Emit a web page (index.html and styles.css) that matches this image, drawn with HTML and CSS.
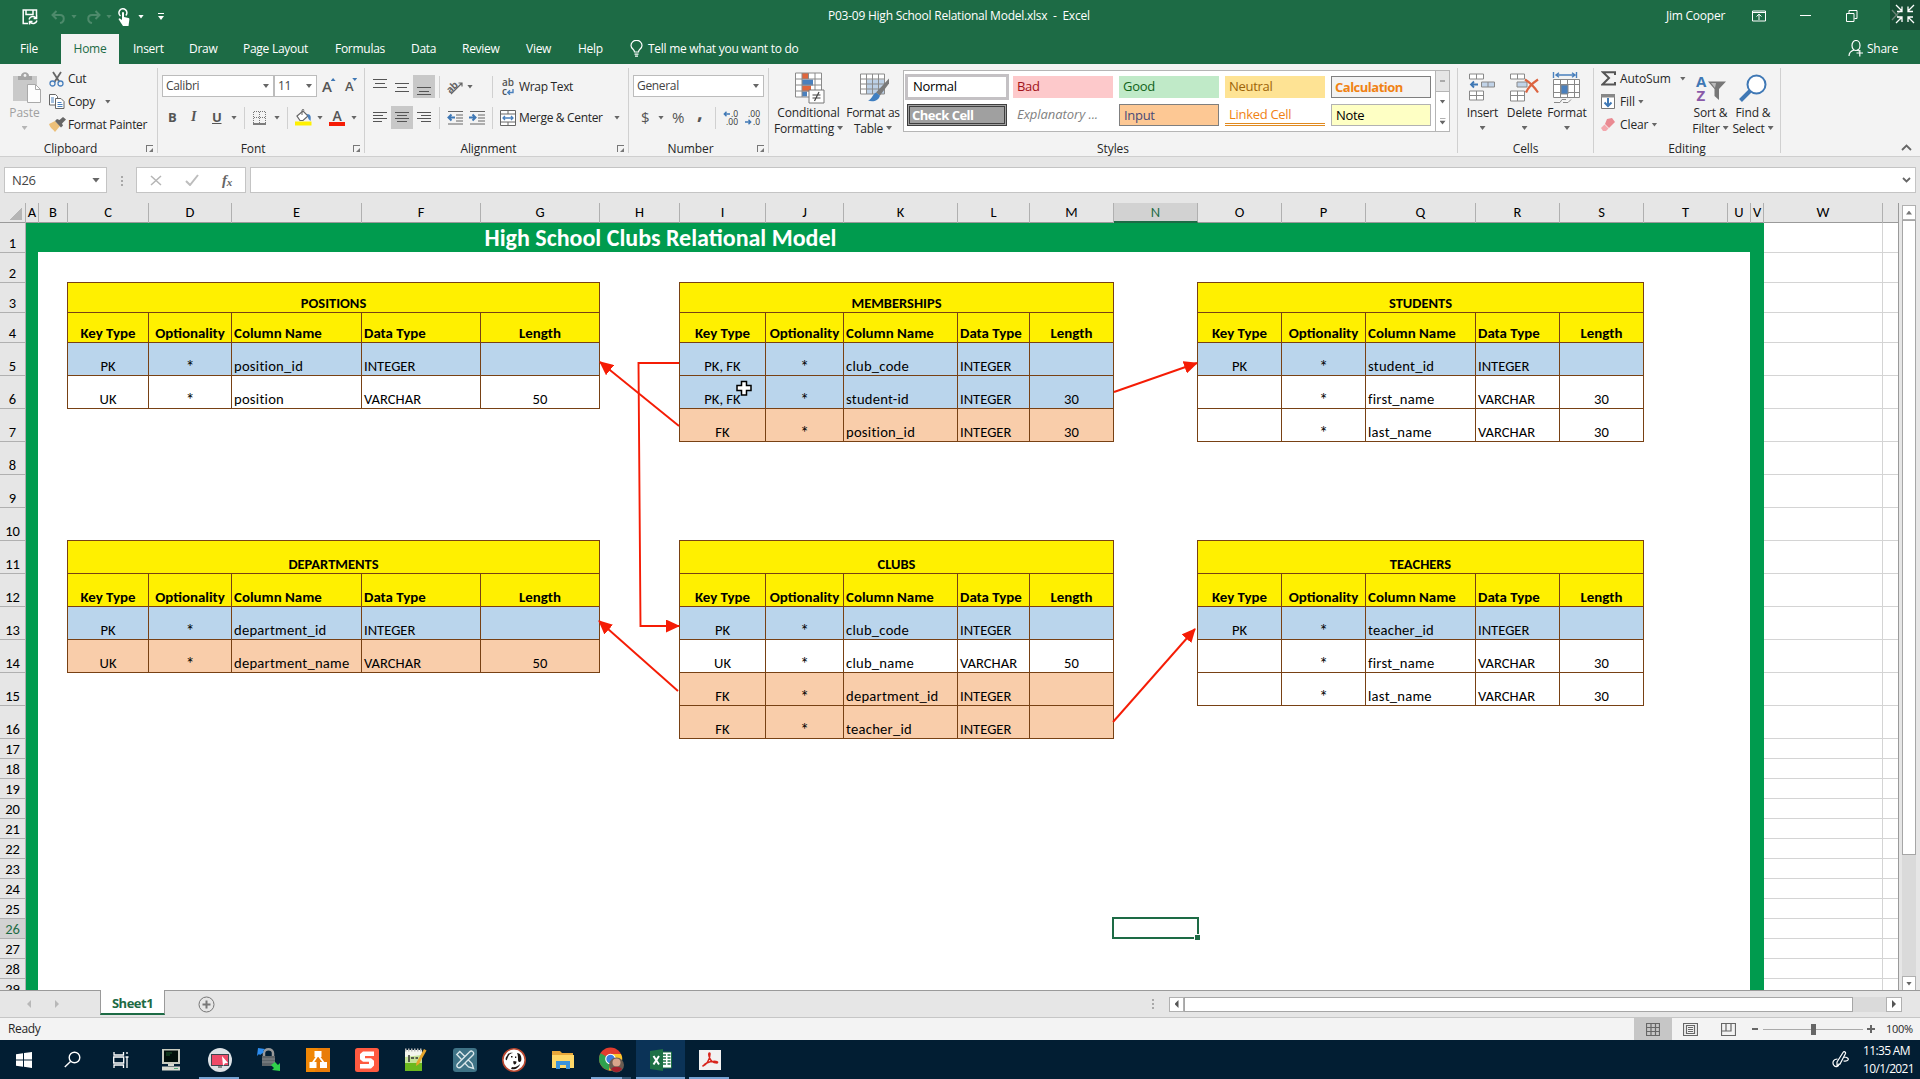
FILE: index.html
```html
<!DOCTYPE html>
<html lang="en">
<head>
<meta charset="utf-8">
<title>P03-09 High School Relational Model.xlsx - Excel</title>
<link rel="stylesheet" href="styles.css">
</head>
<body>
<div class="app">
  <header class="titlebar">
    <div class="quick">
      <svg width="16" height="16" viewBox="0 0 16 16" fill="none" stroke="#fff" stroke-width="1.5"><path d="M6 14.5H1.2V1h13.3v5M4 1v4.5h7V1"/><path d="M7 10.5a4 4 0 0 1 7-1.5M15 11.500a4 4 0 0 1-7 1.500M14.600 6v3.500h-3M7.500 15.500v-3h3"/></svg>
      <svg width="15" height="14" viewBox="0 0 15 14" fill="none" stroke="#4d8a6b" stroke-width="2"><path d="M5.500 1L1.500 5l4 4M2 5h7c5 0 5 7 0 8"/></svg>
      <i class="caret dim"></i>
      <svg width="15" height="14" viewBox="0 0 15 14" fill="none" stroke="#4d8a6b" stroke-width="2"><path d="M9.500 1l4 4-4 4M13 5H6C1 5 1 12 6 13"/></svg>
      <i class="caret dim"></i>
      <svg width="12" height="18" viewBox="0 0 12 18"><path d="M3 15L.5 11l1-.8L4 12V5c0-1.500 2-1.500 2 0v4l4.500 1c1 .3 1 1 .8 2L10.500 18H5z" fill="#fff"/><path d="M2.500 8A4 4 0 1 1 7.800 7.600" fill="none" stroke="#fff" stroke-width="1.500"/></svg>
      <i class="caret white"></i>
      <span class="customize"></span>
    </div>
    <div class="doc-title">P03-09 High School Relational Model.xlsx&nbsp; -&nbsp; Excel</div>
    <div class="account">Jim Cooper</div>
    <div class="win">
      <svg width="14" height="12" viewBox="0 0 14 12" fill="none" stroke="#fff"><path d="M.5 1h13v10H.5zM.5 2.500h13M7 10V4.500M4.500 6.500L7 4.200l2.500 2.300"/></svg>
      <svg width="11" height="12" viewBox="0 0 11 12" stroke="#fff"><path d="M0 5.500h11"/></svg>
      <svg width="12" height="12" viewBox="0 0 12 12" fill="none" stroke="#fff"><path d="M.5 3.500h7.500v8H.5zM3 3.500V.5h8v8H8.500"/></svg>
    </div>
    <div class="exit-full"><svg width="30" height="30" viewBox="0 0 30 30" fill="none" stroke="#fff" stroke-width="1.300"><path d="M2 10l9 10M11 10l-9 10" stroke="#6b8276"/><path d="M6 5l6 6M12 6.500V11.500H7M24 5l-6 6M18 6.500V11.500h5M6 23l6-6M12 22v-5H7M24 23l-6-6M18 22v-5h5"/></svg></div>
  </header>

  <nav class="tabs">
    <span>File</span><span class="active">Home</span><span>Insert</span><span>Draw</span><span>Page Layout</span><span>Formulas</span><span>Data</span><span>Review</span><span>View</span><span>Help</span>
    <svg width="13" height="17" viewBox="0 0 13 17" fill="none" stroke="#fff" stroke-width="1.200"><path d="M4.500 12c0-3-3.500-3-3.500-6.500a5.300 5 0 0 1 11 0C12 9 8.500 9 8.500 12zM4.500 14.200h4M5 16.200h3"/></svg>
    <span>Tell me what you want to do</span>
    <svg width="16" height="17" viewBox="0 0 16 17" fill="none" stroke="#fff" stroke-width="1.200"><ellipse cx="8" cy="5.500" rx="4" ry="5"/><path d="M1 16c0-3 2-5 5-6M9 10l2 1M8.500 13h6.500M11.800 10v6.500"/></svg>
    <span>Share</span>
  </nav>

  <section class="ribbon">
    <div class="group clipboard">
      <div class="content">
        <div class="paste">
          <svg width="30" height="31" viewBox="0 0 30 31"><path d="M0 4h24v25H0z" fill="#c9c9c9"/><path d="M5 8V4h3c0-5 8-5 8 0h3v4z" fill="#a5a5a5"/><circle cx="12" cy="3.500" r="1.400" fill="#f3f3f3"/><path d="M14.500 12.500h8l5 5v13h-13z" fill="#fdfdfd" stroke="#a9a9a9"/><path d="M22.500 12.500v5h5" fill="none" stroke="#a9a9a9"/></svg>
          <span>Paste</span><i class="caret"></i>
        </div>
        <div class="stack">
          <div><svg width="16" height="16" viewBox="0 0 16 16" fill="none" stroke-width="1.800"><path d="M4 1l6.500 10M12 1L5.500 11" stroke="#666"/><circle cx="3.500" cy="12.500" r="2.500" stroke="#4a80bd" stroke-width="1.300"/><circle cx="11.500" cy="12.500" r="2.500" stroke="#4a80bd" stroke-width="1.300"/></svg><span>Cut</span></div>
          <div><svg width="16" height="15" viewBox="0 0 16 15" fill="#fff" stroke="#666"><path d="M.5.5h6l2 2v8.500h-8z"/><path d="M6.500 4.500h5.500l3 3v7H6.500z"/><path d="M2 4h3M2 6h3M2 8h3M8.500 8.500h4M8.500 10.500h5M8.500 12.500h5" stroke="#4a80bd"/></svg><span>Copy</span><i class="caret"></i></div>
          <div><svg width="17" height="15" viewBox="0 0 17 15"><path d="M0 7l6-3 5 5-5 6C4 12 1 11 0 7z" fill="#ecc07a"/><path d="M6 4l2-2 2.500 1L14 0l3 2.500-4 4 1 2-2 2z" fill="#666"/></svg><span>Format Painter</span></div>
        </div>
      </div>
      <footer>Clipboard<i class="launch"></i></footer>
    </div>

    <div class="group font">
      <div class="content two">
        <div class="row r1">
          <span class="combo">Calibri<i class="caret"></i></span><span class="combo">11<i class="caret"></i></span>
          <b class="grow">A<i class="caret up"></i></b><b class="shrink">A<i class="caret"></i></b>
        </div>
        <div class="row r2">
          <b>B</b><em>I</em><u>U</u><i class="caret"></i><i class="bar"></i>
          <svg width="14" height="14" viewBox="0 0 14 14" stroke="#777"><path d="M1 .5h12M1 6.500h12M.5 1v12M6.500 1v12M12.500 1v12" stroke-dasharray="1 1" fill="none"/><path d="M0 13h13" stroke-width="1.500" stroke="#555"/></svg>
          <i class="caret"></i><i class="bar"></i>
          <svg width="17" height="17" viewBox="0 0 17 17"><path d="M2 7l6-5 5 5-5 4.500H5z" fill="#fff" stroke="#666" stroke-width="1.200"/><path d="M7 6V1.500c0-1.500 2-1.500 2 0" stroke="#666" fill="none"/><path d="M12 5c4 0 4 3 3.500 7l-2-2z" fill="#4a80bd"/><path d="M0 12.500h16.500v4H0z" fill="#fff000"/></svg>
          <i class="caret"></i>
          <span class="font-color">A</span><i class="caret"></i>
        </div>
      </div>
      <footer>Font<i class="launch"></i></footer>
    </div>

    <div class="group alignment">
      <div class="content two">
        <div class="row r1">
          <svg class="al" width="22" height="23"><path d="M4 4.500h14M6 8.500h10M4 12.500h14"/></svg>
          <svg class="al" width="22" height="23"><path d="M4 8.500h14M6 12.500h10M4 16.500h14"/></svg>
          <svg class="al on" width="22" height="23"><path d="M4 12.500h14M6 16.500h10M4 19.500h14"/></svg>
          <i class="bar"></i>
          <svg class="orient" width="17" height="16" viewBox="0 0 17 16"><text x="-1" y="11" class="ab" transform="rotate(-45 6 8)">ab</text><path d="M4 15L15 4M11.500 4H15v3.500" fill="none" stroke="#666" stroke-width="1.200"/></svg>
          <i class="caret"></i><i class="bar"></i>
          <span class="wrap-icon">ab<br>c<svg width="7" height="6" viewBox="0 0 7 6"><path d="M6 0v3.500H1M3 1.200L.8 3.500 3 5.800" fill="none" stroke="#4a80bd" stroke-width="1.400"/></svg></span>
          <span>Wrap Text</span>
        </div>
        <div class="row r2">
          <svg class="al" width="22" height="23"><path d="M4 6.500h14M4 9.500h10M4 12.500h14M4 15.500h9"/></svg>
          <svg class="al on" width="22" height="23"><path d="M4 6.500h14M6 9.500h10M4 12.500h14M6 15.500h10"/></svg>
          <svg class="al" width="22" height="23"><path d="M4 6.500h14M8 9.500h10M4 12.500h14M8 15.500h10"/></svg>
          <i class="bar"></i>
          <svg width="17" height="14" viewBox="0 0 17 14"><path d="M1 .5h15M9 4h7M9 7h7M9 10h7M1 13h15" stroke="#666"/><path d="M8 6.500H2M4.500 3.500l-3 3 3 3" fill="none" stroke="#3f78b5" stroke-width="2"/></svg>
          <svg width="17" height="14" viewBox="0 0 17 14"><path d="M1 .5h15M9 4h7M9 7h7M9 10h7M1 13h15" stroke="#666"/><path d="M0 6.500h6M3.500 3.500l3 3-3 3" fill="none" stroke="#3f78b5" stroke-width="2"/></svg>
          <i class="bar"></i>
          <svg width="16" height="16" viewBox="0 0 16 16" fill="#fff" stroke="#666"><path d="M.5.5h15v15H.5zM.5 4h15M.5 12h15M8 .5V4M8 12v3.500"/><path d="M3 8h10M5 6L3 8l2 2M11 6l2 2-2 2" fill="none" stroke="#4a80bd" stroke-width="1.300"/></svg>
          <span>Merge &amp; Center</span><i class="caret"></i>
        </div>
      </div>
      <footer>Alignment<i class="launch"></i></footer>
    </div>

    <div class="group number">
      <div class="content two">
        <div class="row r1"><span class="combo">General<i class="caret"></i></span></div>
        <div class="row r2">
          <span class="sym">$</span><i class="caret"></i><span class="sym">%</span><b class="comma">,</b><i class="bar"></i>
          <span class="dec"><svg width="7" height="6" viewBox="0 0 7 6"><path d="M7 3H1.500M3.500.8L1.300 3l2.200 2.200" fill="none" stroke="#3f78b5" stroke-width="1.400"/></svg>.0<br>.00</span><span class="dec">.00<br><svg width="7" height="6" viewBox="0 0 7 6"><path d="M0 3h5.500M3.500.8L5.700 3 3.500 5.200" fill="none" stroke="#3f78b5" stroke-width="1.400"/></svg>.0</span>
        </div>
      </div>
      <footer>Number<i class="launch"></i></footer>
    </div>

    <div class="group styles">
      <div class="content">
        <div class="big cond">
          <svg width="30" height="31" viewBox="0 0 30 31"><path d="M.5.500h26v24H.5z" fill="#fff"/><path d="M7 .5h6v6H7zM7 13h9v6H7z" fill="#e0663c"/><path d="M7 7h11v6H7zM7 19h5v5H7z" fill="#4a80bd"/><path d="M.5.500h26v24H.5zM.5 6.500h26M.5 12.500h26M.5 18.500h26M7 .5v24M13.500.5v6M20 .5v24" fill="none" stroke="#8a8a8a"/><path d="M14 17.500h15v13H14z" fill="#fff" stroke="#777"/><path d="M17.500 22.500h8M17.500 25.500h8M24 19.500l-4.500 9" stroke="#444" stroke-width="1.200"/></svg>
          <span>Conditional</span><span>Formatting<i class="caret"></i></span>
        </div>
        <div class="big fmt">
          <svg width="30" height="29" viewBox="0 0 30 29"><path d="M.5.500h24v20H.5z" fill="#fff"/><path d="M6.500 6h18v14.500h-18z" fill="#bcd0e6"/><path d="M.5.500h24v20H.5zM.5 5.500h24M.5 10.500h24M.5 15.500h24M6.500.5v20M12.500.5v20M18.500.5v20" fill="none" stroke="#8a8a8a"/><path d="M29 5v5l-9 12-4-3z" fill="#7a7a7a"/><path d="M16 19l4 3c-1 5-7 7-12 5 4-1 4-6 8-8z" fill="#3f7fc1"/></svg>
          <span>Format as</span><span>Table<i class="caret"></i></span>
        </div>
        <div class="gallery">
          <div class="swatches">
            <span class="normal">Normal</span><span class="bad">Bad</span><span class="good">Good</span><span class="neutral">Neutral</span><span class="calc">Calculation</span>
            <span class="check">Check Cell</span><span class="expl">Explanatory ...</span><span class="input">Input</span><span class="linked">Linked Cell</span><span class="note">Note</span>
          </div>
          <div class="spin"><i class="caret up"></i><i class="caret"></i><i class="caret more"></i></div>
        </div>
      </div>
      <footer>Styles</footer>
    </div>

    <div class="group cells">
      <div class="content">
        <div class="big"><svg width="28" height="29" viewBox="0 0 28 29" fill="#fff" stroke="#888"><path d="M.5.500h14v5H.5zM7.500.5v5M.5 17.500h14v9H.5zM7.500 17.500v9M.5 22h14"/><path d="M12.500 8.500h13v5h-13zM19 8.500v5" fill="#c1d3e8"/><path d="M9 11H2M5 8l-3 3 3 3" fill="none" stroke="#3f78b5" stroke-width="1.800"/></svg><span>Insert</span><i class="caret"></i></div>
        <div class="big"><svg width="30" height="29" viewBox="0 0 30 29" fill="#fff" stroke="#888"><path d="M.5.500h14v5H.5zM7.500.5v5M.5 17.500h14v10H.5zM7.500 17.500v10M.5 22h14"/><path d="M7 8.500h10v5H7z" fill="#c1d3e8"/><path d="M15 6c5 3 9 7 13 13M28 6c-6 4-10 8-12 13" fill="none" stroke="#dc6440" stroke-width="2.200"/></svg><span>Delete</span><i class="caret"></i></div>
        <div class="big"><svg width="28" height="32" viewBox="0 0 28 32" fill="#fff" stroke="#888"><path d="M.5 7.500h26v18H.5z"/><path d="M.5 12.500h26M.5 20.500h26M7.500 7.500v18M14.500 7.500v18M21.500 7.500v18M1 30.500h6l2-3h4M10 30.500h5l3-3"/><path d="M8 13h7v9H8z" fill="#4a80bd"/><path d="M3 3h19M6 .8L3 3l3 2.200M19 .8L22 3l-3 2.200M.5 0v6M23.500 0v6" fill="none" stroke="#4a80bd" stroke-width="1.400"/></svg><span>Format</span><i class="caret"></i></div>
      </div>
      <footer>Cells</footer>
    </div>

    <div class="group editing">
      <div class="content">
        <div class="stack">
          <div><svg width="16" height="15" viewBox="0 0 16 15" fill="none" stroke="#555" stroke-width="2"><path d="M14 4V1.200H2L8 7l-6.500 6.500H14V11"/></svg><span>AutoSum</span><i class="caret"></i></div>
          <div><svg width="14" height="15" viewBox="0 0 14 15"><path d="M.5.500h13v14H.5z" fill="#fff" stroke="#777"/><path d="M0 0h14v3.500H0z" fill="#888"/><path d="M7 4v8M3.500 8.500L7 12l3.500-3.500" fill="none" stroke="#3f78b5" stroke-width="2"/></svg><span>Fill<i class="caret"></i></span></div>
          <div><svg width="14" height="13" viewBox="0 0 14 13"><path d="M6 1l5-1 3 4-6 6-4-4z" fill="#ea8a92"/><path d="M3.500 6.500L7.500 10.500 5 13H2L0 10z" fill="#f3a8ae"/></svg><span>Clear<i class="caret"></i></span></div>
        </div>
        <div class="big sort"><svg width="30" height="28" viewBox="0 0 30 28"><text x="0" y="12.500" class="sa">A</text><text x="0.500" y="27" class="sz">Z</text><path d="M12 7.500h18l-7 7.500v11l-4.500-4v-7z" fill="#777"/><path d="M15 9h5l-1 5z" fill="#bbb"/></svg><span>Sort &amp;</span><span>Filter<i class="caret"></i></span></div>
        <div class="big find"><svg width="28" height="28" viewBox="0 0 28 28" fill="none" stroke="#3f78b5"><circle cx="17.500" cy="10.500" r="9" stroke-width="2" fill="#fff"/><path d="M11 17L1.500 26.500" stroke-width="4"/></svg><span>Find &amp;</span><span>Select<i class="caret"></i></span></div>
      </div>
      <footer>Editing</footer>
    </div>
    <svg class="collapse" width="11" height="7" viewBox="0 0 11 7"><path d="M1 6l4.500-4.500L10 6" fill="none" stroke="#666" stroke-width="1.800"/></svg>
  </section>

  <section class="formula">
    <div class="namebox">N26<i class="caret wide"></i></div>
    <i class="dots"></i>
    <div class="fxbox">
      <svg width="12" height="11" viewBox="0 0 12 11" stroke="#b5b5b5" stroke-width="1.500"><path d="M1 1l10 9M11 1L1 10"/></svg>
      <svg width="14" height="12" viewBox="0 0 14 12" fill="none" stroke="#bdbdbd" stroke-width="2"><path d="M1 7l4 4L13 1"/></svg>
      <span><em>f</em><sub>x</sub></span>
    </div>
    <div class="fbox"><svg width="9" height="6" viewBox="0 0 9 6"><path d="M1 1l3.500 3.500L8 1" fill="none" stroke="#666" stroke-width="1.800"/></svg></div>
  </section>

  <main class="work">
    <div class="sheet">
      <div class="col-heads">
        <span class="corner"></span><span>A</span><span>B</span><span>C</span><span>D</span><span>E</span><span>F</span><span>G</span><span>H</span><span>I</span><span>J</span><span>K</span><span>L</span><span>M</span><span class="sel">N</span><span>O</span><span>P</span><span>Q</span><span>R</span><span>S</span><span>T</span><span>U</span><span>V</span><span>W</span><span></span>
      </div>
      <div class="row-heads">
        <span>1</span><span>2</span><span>3</span><span>4</span><span>5</span><span>6</span><span>7</span><span>8</span><span>9</span><span>10</span><span>11</span><span>12</span><span>13</span><span>14</span><span>15</span><span>16</span><span>17</span><span>18</span><span>19</span><span>20</span><span>21</span><span>22</span><span>23</span><span>24</span><span>25</span><span class="sel">26</span><span>27</span><span>28</span><span>29</span>
      </div>
      <div class="frame-top"></div><div class="frame-left"></div><div class="frame-right"></div>
      <h1>High School Clubs Relational Model</h1>
      <div class="lines">
        <i></i><i></i><i></i><i></i><i></i><i></i><i></i><i></i><i></i><i></i><i></i><i></i><i></i><i></i><i></i><i></i><i></i><i></i><i></i><i></i><i></i><i></i><i></i><i></i><i></i><i></i><i></i><i></i><i></i>
      </div>
      <div class="line-v"></div>

      <section class="entity positions">
        <h2>POSITIONS</h2>
        <b>Key Type</b><b>Optionality</b><b>Column Name</b><b>Data Type</b><b>Length</b>
        <div class="rec pk"><span>PK</span><span>*</span><span>position_id</span><span>INTEGER</span><span></span></div>
        <div class="rec"><span>UK</span><span>*</span><span>position</span><span>VARCHAR</span><span>50</span></div>
      </section>
      <section class="entity memberships">
        <h2>MEMBERSHIPS</h2>
        <b>Key Type</b><b>Optionality</b><b>Column Name</b><b>Data Type</b><b>Length</b>
        <div class="rec pk"><span>PK, FK</span><span>*</span><span>club_code</span><span>INTEGER</span><span></span></div>
        <div class="rec pk"><span>PK, FK</span><span>*</span><span>student-id</span><span>INTEGER</span><span>30</span></div>
        <div class="rec fk"><span>FK</span><span>*</span><span>position_id</span><span>INTEGER</span><span>30</span></div>
      </section>
      <section class="entity students">
        <h2>STUDENTS</h2>
        <b>Key Type</b><b>Optionality</b><b>Column Name</b><b>Data Type</b><b>Length</b>
        <div class="rec pk"><span>PK</span><span>*</span><span>student_id</span><span>INTEGER</span><span></span></div>
        <div class="rec"><span></span><span>*</span><span>first_name</span><span>VARCHAR</span><span>30</span></div>
        <div class="rec"><span></span><span>*</span><span>last_name</span><span>VARCHAR</span><span>30</span></div>
      </section>
      <section class="entity departments">
        <h2>DEPARTMENTS</h2>
        <b>Key Type</b><b>Optionality</b><b>Column Name</b><b>Data Type</b><b>Length</b>
        <div class="rec pk"><span>PK</span><span>*</span><span>department_id</span><span>INTEGER</span><span></span></div>
        <div class="rec fk"><span>UK</span><span>*</span><span>department_name</span><span>VARCHAR</span><span>50</span></div>
      </section>
      <section class="entity clubs">
        <h2>CLUBS</h2>
        <b>Key Type</b><b>Optionality</b><b>Column Name</b><b>Data Type</b><b>Length</b>
        <div class="rec pk"><span>PK</span><span>*</span><span>club_code</span><span>INTEGER</span><span></span></div>
        <div class="rec"><span>UK</span><span>*</span><span>club_name</span><span>VARCHAR</span><span>50</span></div>
        <div class="rec fk"><span>FK</span><span>*</span><span>department_id</span><span>INTEGER</span><span></span></div>
        <div class="rec fk"><span>FK</span><span>*</span><span>teacher_id</span><span>INTEGER</span><span></span></div>
      </section>
      <section class="entity teachers">
        <h2>TEACHERS</h2>
        <b>Key Type</b><b>Optionality</b><b>Column Name</b><b>Data Type</b><b>Length</b>
        <div class="rec pk"><span>PK</span><span>*</span><span>teacher_id</span><span>INTEGER</span><span></span></div>
        <div class="rec"><span></span><span>*</span><span>first_name</span><span>VARCHAR</span><span>30</span></div>
        <div class="rec"><span></span><span>*</span><span>last_name</span><span>VARCHAR</span><span>30</span></div>
      </section>
      <div class="active-cell"></div>
      <svg class="links" width="1899" height="787" viewBox="0 203 1899 787" fill="none" stroke="#f51c05" stroke-width="1.900">
        <defs><marker id="tip" viewBox="0 0 14 13" refX="13" refY="6.5" markerWidth="14" markerHeight="13" markerUnits="userSpaceOnUse" orient="auto"><path d="M0 0l14 6.500L0 13z" fill="#f51c05" stroke="none"/></marker></defs>
        <path d="M679 363H638.500L640.500 626H679" marker-end="url(#tip)"/>
        <path d="M679 426L600 362" marker-end="url(#tip)"/>
        <path d="M1114 392L1197 363" marker-end="url(#tip)"/>
        <path d="M678 691L599 621" marker-end="url(#tip)"/>
        <path d="M1113 722L1195 629" marker-end="url(#tip)"/>
        <path d="M741.500 381.500h5v4h4.500v5h-4.500v4.500h-5v-4.500h-4.500v-5h4.500z" fill="#fff" stroke="#000" stroke-width="1.500"/>
      </svg>
    </div>
    <div class="vscroll"><span class="btn"><i class="caret up"></i></span><span class="thumb"></span><span class="track"></span><span class="btn"><i class="caret"></i></span></div>
  </main>

  <section class="sheetbar">
    <i class="tri left"></i><i class="tri right"></i>
    <div class="sheet-tab">Sheet1</div>
    <svg class="add" width="17" height="17" viewBox="0 0 17 17" fill="none" stroke="#777"><circle cx="8.500" cy="8.500" r="7.500"/><path d="M8.500 4.500v8M4.500 8.500h8" stroke-width="2"/></svg>
    <i class="dots"></i>
    <div class="hscroll"><span class="btn"><i class="tri left dark"></i></span><span class="thumb"></span><span class="track"></span><span class="btn"><i class="tri right dark"></i></span></div>
  </section>

  <section class="status">
    <span>Ready</span>
    <div class="view on"><svg width="14" height="13" viewBox="0 0 14 13" fill="none" stroke="#666" stroke-width="1.200"><path d="M.5.500h13v12H.5zM.5 4.500h13M.5 8.500h13M5 .5v12M9.500.5v12"/></svg></div>
    <div class="view"><svg width="15" height="13" viewBox="0 0 15 13" fill="none" stroke="#666" stroke-width="1.200"><path d="M.5.500h14v12H.5zM3.500 2.500h8v8h-8zM5 4.500h5M5 6.500h5M5 8.500h5"/></svg></div>
    <div class="view"><svg width="15" height="13" viewBox="0 0 15 13" fill="none" stroke="#666" stroke-width="1.200"><path d="M.5.500h14v12H.5zM.5 8h9.500V.5M5 .5V8"/></svg></div>
    <i class="minus"></i><div class="slider"><i></i></div><i class="plus"></i><span class="pct">100%</span>
  </section>

  <footer class="taskbar">
    <div><svg width="16" height="16" viewBox="0 0 16 16" fill="#fff"><path d="M0 2.200L7 1.300v6.200H0zM8 1.100L16 0v7.500H8zM0 8.500h7v6.200l-7-1zM8 8.500h8V16l-8-1.200z"/></svg></div>
    <div><svg width="17" height="17" viewBox="0 0 17 17" fill="none" stroke="#fff" stroke-width="1.400"><circle cx="10.500" cy="6.500" r="5.300"/><path d="M6.500 10.500L.8 16"/></svg></div>
    <div><svg width="17" height="16" viewBox="0 0 17 16" fill="none" stroke="#fff" stroke-width="1.300"><path d="M1 0v3h9.500V0M1 16v-3h9.500v3M.7 5h10v6H.7zM14 0v2M14 5v11M12.500 5h3"/></svg></div>
    <div><svg width="20" height="22" viewBox="0 0 20 22"><path d="M1 0h18v15H1z" fill="#c9ccbf"/><path d="M3 1.500h14v11.500H3z" fill="#02100a"/><path d="M5 4h6M5 6h4" stroke="#1d5a2c"/><path d="M7 15h6v2H7zM1 17.500h18v4H1z" fill="#d9dbd0"/><path d="M13 19.500h4" stroke="#5a7"/></svg></div>
    <div class="open"><svg width="24" height="24" viewBox="0 0 24 24"><circle cx="12" cy="12" r="12" fill="#dde2e6"/><path d="M3 6h18v12H3z" fill="#3c4650"/><path d="M4 7h16v10H4z" fill="#ef4a68"/><path d="M10 18h4v2h-4z" fill="#888"/><path d="M14 8l6 7-3 .3-2 2.700z" fill="#fff"/></svg></div>
    <div><svg width="24" height="24" viewBox="0 0 24 24"><path d="M7 8V5c0-5 9-5 9 0v3" fill="none" stroke="#9a9a9a" stroke-width="2.500"/><path d="M5 8h13v10H5z" fill="#5e6468"/><path d="M5 11h13M5 14h13" stroke="#85898c"/><path d="M1 0l7 1-2 2 1 1-4 3-1-1-2 2z" fill="#2d8df0"/><path d="M23 23l-8-1 2-2-3-3 4-3 3 3 2-2z" fill="#2fd04a"/></svg></div>
    <div><svg width="24" height="24" viewBox="0 0 24 24"><path d="M0 0h24v24H0z" fill="#f08705"/><path d="M12 0h12v24H9z" fill="#df6c0c" opacity=".4"/><path d="M12 7L6.500 15M12 7l6 8" stroke="#fff" stroke-width="1.800"/><path d="M8.500 3h7v6h-7zM3.500 14h7v6h-7zM14 14h7v6h-7z" fill="#fff"/></svg></div>
    <div><svg width="24" height="24" viewBox="0 0 24 24"><rect width="24" height="24" rx="2.500" fill="#ff5a40"/><path d="M8 3.500h11v4.500H10v2.200h6l3 2.500v4.800l-3 3H5v-4.500h9v-2.200H8l-3-2.500V6z" fill="#fff"/></svg></div>
    <div><svg width="23" height="24" viewBox="0 0 23 24"><path d="M1 2h17v21H1z" fill="#f4f6ee"/><path d="M1 9l17-2v16H1z" fill="#c5e39a"/><path d="M1 15h17v8H1z" fill="#6cb81e"/><path d="M1 2h17" stroke="#bbb" stroke-width="3" stroke-dasharray="1.500 1.500"/><path d="M5 7v7M7 10h3M11.500 10h2.500" stroke="#333" stroke-width="1.500"/><path d="M20 1l2.500 1.500L15 16l-3 2 .5-3.500z" fill="#e7a52c"/></svg></div>
    <div><svg width="24" height="24" viewBox="0 0 24 24"><rect width="24" height="24" rx="3" fill="#3f7386"/><g fill="none" stroke="#dbe7ea" stroke-width="1.400"><path d="M3.800 6.500L6.800 3.500 19 15.500l1.500 5-5-1.500z"/><path d="M19.500 3.500c1.500 1 1.500 2.500.5 3.500L8.500 18.500c-3 3-6 0-4-2.500L16.500 4c1-1 2-1.200 3-.5z" fill="#3f7386"/></g></svg></div>
    <div><svg width="24" height="24" viewBox="0 0 24 24"><circle cx="12" cy="12" r="11.200" fill="#fff" stroke="#b9472f" stroke-width="1.600"/><path d="M5 8c1-3 4-4 6-3-2 0-4 1-5 4-1 2-1 4-2 3s0-3 1-4zM15 5c4 0 5 5 4 8-1 2-3 1-3-1 0-3 0-5-1-7zM11.500 13l3 .5c0 2-1 3-2 3s-1.500-2-1-3.500zM10 19c3 1 6-1 8-3-1 4-5 6-9 5z" fill="#1c1512"/><path d="M9 8h1.500v1.500H9zM13 8.500h1.300V10H13z" fill="#1c1512"/></svg></div>
    <div><svg width="22" height="20" viewBox="0 0 22 20"><path d="M0 1h8l2 2h11v15H0z" fill="#e8a83a"/><path d="M0 5h22v13H0z" fill="#ffd868"/><path d="M4 11h14v8h-4v-4H8v4H4z" fill="#3a93dc"/></svg></div>
    <div class="open multi"><svg width="25" height="26" viewBox="0 0 25 26"><circle cx="11.500" cy="12" r="11.500" fill="#e23c2e"/><path d="M11.500 12L1.600 6.200A11.500 11.500 0 0 0 10 23.400z" fill="#2fa14f"/><path d="M11.500 12l-1.500 11.400A11.500 11.500 0 0 0 22 7H11.500z" fill="#fbc52c"/><circle cx="11.500" cy="12" r="5.300" fill="#fff"/><circle cx="11.500" cy="12" r="4.200" fill="#3b7de0"/><circle cx="17.500" cy="18" r="7.500" fill="#6a5c52"/><circle cx="17.500" cy="15.500" r="4" fill="#d9a58b"/><path d="M12 22c2-3 9-3 11 0-3 4-8 4-11 0z" fill="#a5202c"/></svg></div>
    <div class="open current"><svg width="22" height="22" viewBox="0 0 22 22"><path d="M11 3h10.500v16H11z" fill="#fff" stroke="#1e7145"/><path d="M13 6h3M17.500 6h3M13 9h3M17.500 9h3M13 12h3M17.500 12h3M13 15h3M17.500 15h3" stroke="#1e7145" stroke-width="1.600"/><path d="M0 2l13-2v22L0 20z" fill="#1e7145"/><path d="M3.500 7l5.500 8.500M9 7l-5.500 8.500" stroke="#fff" stroke-width="2"/></svg></div>
    <div class="open"><svg width="22" height="20" viewBox="0 0 22 20"><path d="M0 0h22v20H0z" fill="#f2f2f2"/><path d="M4 16c3-1 7-6 7-12 0-2-2-1-1 2 1 4 4 7 8 7 2-1-1-2-4-1.500-4 0-8 2-9 3.500-1 1-1.500 1-1 1z" fill="none" stroke="#d8251d" stroke-width="1.500"/></svg></div>
    <svg class="pen" width="17" height="17" viewBox="0 0 17 17" fill="none" stroke="#fff" stroke-width="1.200"><path d="M5 11L11 1.500c1-1.500 3-.5 2.500 1L8 13l-3 1.500zM5.500 8C1 8 0 12 2 14.500c2 2 5 1 5-2M12 6c3 0 5 1.500 4 3s-3 1-4.500 1"/></svg>
    <div class="clock"><span>11:35 AM</span><span>10/1/2021</span></div>
  </footer>
</div>
</body>
</html>
```
FILE: styles.css
```css
* { box-sizing: border-box; }
body {
  margin: 0;
  font: 12px/16px "Open Sans", "Noto Sans", sans-serif;
  font-stretch: 89%;
  letter-spacing: -.33px;
  color: #262626;
  overflow: hidden;
}
i, em { font-style: normal; }
svg { display: block; flex: none; }
.app {
  width: 1920px;
  height: 1079px;
  display: grid;
  grid-template-rows: 34px 30px 93px 46px 787px 28px 22px 39px;
  background: #e6e6e6;
  white-space: nowrap;
}

.caret {
  display: inline-block;
  flex: none;
  width: 6px;
  height: 4px;
  background: #666;
  clip-path: polygon(0 0, 100% 0, 50% 100%);
}
.caret.up { clip-path: polygon(0 100%, 100% 100%, 50% 0); background: #777; }
.caret.dim { background: #4d8a6b; }
.caret.white { background: #fff; }
.caret.wide { width: 8px; height: 5px; }

/* Title bar */
.titlebar {
  background: #1d6b45;
  color: #fff;
  display: grid;
  grid-template-columns: 828px 838px 86px 138px 30px;
}
.quick {
  display: grid;
  grid-template-columns: 29px 20px 15px 20px 12px 20px 20px auto;
  padding: 0 0 1px 22px;
  align-items: center;
  justify-items: start;
}
.customize { width: 6px; height: 7px; border-top: 1px solid #fff; position: relative; }
.customize::after {
  content: ""; position: absolute; left: 0; top: 2px;
  border: 3px solid transparent; border-top: 4px solid #fff; border-bottom: 0;
}
.doc-title, .account { line-height: 31px; letter-spacing: -.24px; }
.win {
  display: grid;
  grid-template-columns: 48px 46px auto;
  height: 31px;
  align-items: center;
}
.exit-full { background: #174e35; height: 30px; }

/* Tab strip */
.tabs {
  background: #1d6b45;
  color: #fff;
  display: grid;
  grid-template-columns: 61px 58px 70px 54px 92px 76px 51px 64px 52px 52px 18px 1200px 19px 50px;
  line-height: 30px;
  align-items: start;
  letter-spacing: -.27px;
}
.tabs > span:first-child { padding-left: 20px; }
.tabs > span:nth-child(3) { padding-left: 14px; }
.tabs .active { background: #f3f3f3; color: #1d6b45; height: 30px; text-align: center; }
.tabs svg { margin-top: 6px; }

/* Ribbon */
.ribbon {
  background: #f3f3f3;
  border-bottom: 1px solid #cfcfcf;
  display: flex;
  padding-top: 4px;
}
.group { height: 85px; border-right: 1px solid #d0d0d0; display: flex; flex-direction: column; }
.group .content { height: 73px; display: flex; flex: none; }
.group .content.two { flex-direction: column; }
.group footer { position: relative; text-align: center; line-height: 15px; height: 12px; padding-right: 16px; letter-spacing: -.1px; }
.styles footer, .cells footer, .editing footer { padding-right: 0; }
.launch {
  position: absolute; right: 4px; top: 4px; width: 7px; height: 7px;
  border-top: 1px solid #777; border-left: 1px solid #777;
}
.launch::after {
  content: ""; position: absolute; right: 0; bottom: 0; width: 4px; height: 4px;
  background: #777; clip-path: polygon(100% 0, 100% 100%, 0 100%);
}
.clipboard { width: 158px; }
.font { width: 207px; }
.alignment { width: 264px; }
.number { width: 140px; }
.styles { width: 689px; }
.cells { width: 136px; }
.editing { width: 187px; }

.paste { width: 49px; display: flex; flex-direction: column; align-items: center; padding-top: 4px; color: #a0a0a0; }
.paste span { margin-top: 2px; letter-spacing: 0; }
.paste .caret { margin-top: 5px; background: #b5b5b5; }
.paste svg { margin-left: 6px; }
.stack { display: grid; grid-template-rows: repeat(3, 23px); margin-top: -1px; }
.stack > div { display: grid; grid-template-columns: 19px auto auto; align-items: center; justify-content: start; }
.clipboard .stack .caret { margin-left: 10px; }

.row { display: grid; align-items: center; justify-items: start; }
.row.r1 { height: 22px; margin-top: 7px; }
.row.r2 { height: 23px; margin-top: 9px; }
.bar { width: 1px; height: 22px; background: #d0d0d0; }
.combo {
  background: #fff; border: 1px solid #bcbcbc; height: 22px; width: 100%;
  display: flex; align-items: center; justify-content: space-between; padding: 0 4px 0 3px;
  color: #444;
}
.font .r1 { grid-template-columns: 112px 43px 5px 23px auto; padding-left: 4px; }
.font .r1 .grow { grid-column: 4; }
.font .r1 b { font-size: 15px; font-weight: 600; color: #555; display: flex; }
.font .r1 .shrink { font-size: 13px; }
.font .r1 b .caret { background: #3f78b5; width: 5px; height: 3px; margin-left: -1px; }
.font .r2 { grid-template-columns: 23px 21px 19px 13px 9px 21px 13px 8px 22px 12px 22px auto; padding-left: 10px; color: #555; font-size: 13px; }
.font .r2 b, .font .r2 em, .font .r2 u { padding-bottom: 2px; }
.font .r2 em { font: italic bold 14px "Liberation Serif", serif; }
.font .r2 u { font-weight: 700; }
.font-color { font: 600 14px/13px "Open Sans", sans-serif; border-bottom: 4px solid #f51c05; width: 16px; text-align: center; color: #555; }

.al { stroke: #555; }
.al.on { background: #c8c8c8; }
.alignment .r1 { grid-template-columns: 22px 22px 26px 8px 20px 25px 10px 17px auto; padding-left: 4px; }
.alignment .r2 { grid-template-columns: 22px 22px 26px 8px 22px 23px 8px 19px 95px auto; padding-left: 4px; }
.orient { overflow: visible; }
.ab { font: bold 10px "Open Sans", sans-serif; fill: #666; }
.wrap-icon { font-size: 10px; line-height: 9px; font-weight: 600; color: #555; letter-spacing: 0; }
.wrap-icon svg { display: inline-block; }

.number .r1 { padding: 0 4px; }
.number .r2 { grid-template-columns: 17px 14px 25px 18px 8px 22px auto; padding-left: 12px; }
.sym { font-size: 15px; color: #555; padding-bottom: 2px; }
.comma { font-size: 20px; line-height: 10px; margin-top: -12px; color: #555; }
.dec { font-size: 8.5px; line-height: 8px; color: #333; text-align: right; letter-spacing: 0; width: 15px; }
.dec svg { display: inline-block; margin-right: 1px; }

.big { display: flex; flex-direction: column; align-items: center; padding-top: 4px; letter-spacing: -.15px; }
.big svg { height: 32px; overflow: visible; }
.big span { display: block; line-height: 16px; margin-top: 1px; }
.big span + span { margin-top: 0; }
.big > .caret { margin-top: 5px; }
.big span .caret { margin: 0 0 3px 3px; }
.big.cond { width: 79px; }
.big.cond svg { margin-left: 3px; }
.big.fmt { width: 50px; }
.big.fmt svg { margin-left: 3px; }
.big.fmt span { letter-spacing: -.25px; }
.cells .content { display: grid; grid-template-columns: 41px 43px 42px; padding: 0 4px; }
.editing .stack { width: 97px; padding-left: 7px; }
.editing .stack > div { letter-spacing: -.1px; }
.editing .stack span .caret { margin: 0 0 2px 3px; }
.editing .stack div > .caret { margin-left: 9px; }
.sort { width: 39px; }
.find { width: 46px; }
.sa { font: bold 15px "Open Sans", sans-serif; fill: #3f78b5; }
.sz { font: bold 15px "Open Sans", sans-serif; fill: #8a5aa8; }

.gallery { width: 547px; height: 62px; margin: 2px 0 0 5px; border: 1px solid #b5b5b5; background: #fff; display: flex; }
.swatches { flex: 1; display: grid; grid-template: 22px 22px / repeat(5, 100px); gap: 6px; padding: 5px 0 0 3px; font-size: 13px; line-height: 21px; letter-spacing: -.3px; }
.swatches span { padding-left: 4px; }
.swatches .normal { outline: 3px solid #c4c1c4; outline-offset: -1px; background: #fff; color: #000; padding-left: 6px; }
.bad { background: #fdc9cb; color: #a11218; }
.good { background: #c0eac8; color: #116318; }
.neutral { background: #fee394; color: #9d6408; }
.swatches .calc { background: #f2f2f2; border: 1px solid #7f7f7f; color: #f08214; font-weight: 700; letter-spacing: -.5px; padding-left: 3px; }
.swatches .check { background: #a0a0a0; border: 3px double #3f3f3f; color: #fff; font-weight: 700; line-height: 17px; letter-spacing: -.5px; padding-left: 2px; }
.expl { color: #7f7f7f; font-style: italic; letter-spacing: -.05px; }
.swatches .input { background: #fdc894; border: 1px solid #7f7f7f; color: #4a4a78; padding-left: 4px; }
.linked { color: #f08214; border-bottom: 3px double #e08a20; }
.note { background: #feffc4; border: 1px solid #b2b2b2; color: #000; }
.spin { width: 14px; border-left: 1px solid #b5b5b5; display: grid; grid-template-rows: 21px 19px 20px; }
.spin .caret { place-self: center; }
.spin .caret:first-child { place-self: stretch; width: auto; height: auto; clip-path: none; background: linear-gradient(#aaa, #aaa) 50% 50% / 5px 2px no-repeat #e6e6e6; border-bottom: 1px solid #b5b5b5; }
.spin .more { height: 7px; clip-path: polygon(0 0, 100% 0, 100% 15%, 0 15%, 0 45%, 100% 45%, 50% 100%, 0 45%); }
.collapse { margin: 76px 0 0 120px; }

/* Formula bar */
.formula { display: grid; grid-template-columns: 103px 29px 111px 1669px; padding: 10px 0 0 4px; align-items: start; }
.formula > div { background: #fff; border: 1px solid #c4c4c4; height: 26px; display: flex; align-items: center; }
.namebox { justify-content: space-between; padding: 0 6px 0 7px; font-size: 13px; color: #444; }
.dots { justify-self: center; align-self: start; width: 2px; height: 10px; margin-top: 9px; background: repeating-linear-gradient(#a8a8a8 0 2px, transparent 2px 4px); }
.fxbox { padding-left: 13px; gap: 23px; margin-right: 1px; }
.fxbox span { font: italic bold 15px "Liberation Serif", serif; color: #666; }
.fxbox em { font-style: italic; }
.fxbox sub { font-size: 11px; vertical-align: -1px; }
.formula .fbox { justify-content: flex-end; padding-right: 4px; margin-left: 3px; }

/* Worksheet */
.work { display: grid; grid-template-columns: 1899px 21px; min-height: 0; }
.sheet {
  position: relative;
  height: 787px;
  overflow: hidden;
  background: #fff;
  border-right: 1px solid #9a9a9a;
  display: grid;
  grid-template-columns: 26px 13px 29px 81px 83px 130px 119px 119px 80px 86px 78px 114px 72px 84px 84px 84px 84px 110px 84px 84px 84px 23px 13px 119px 16px;
  grid-template-rows: 20px 30px 30px 30px 30px repeat(12, 33px) repeat(13, 20px);
  font-family: Carlito, Lato, sans-serif;
  font-stretch: 100%;
  font-size: 14px;
  letter-spacing: 0;
  color: #000;
}
.col-heads { grid-area: 1 / 1 / 2 / -1; display: grid; grid-template-columns: subgrid; background: #e6e6e6; border-bottom: 1px solid #9a9a9a; line-height: 19px; text-align: center; font-size: 14.500px; }
.col-heads span { border-right: 1px solid #b0b0b0; }
.col-heads span:last-child { border: 0; }
.col-heads .sel { background: #d2d2d2; color: #1d6b45; border-bottom: 2px solid #1d6b45; height: 20px; }
.corner { background: linear-gradient(135deg, transparent 50%, #b5b5b5 50%) 10px 5px / 12px 12px no-repeat; }
.row-heads { grid-area: 2 / 1 / -1 / 2; display: grid; grid-template-rows: subgrid; background: #e6e6e6; text-align: center; border-right: 1px solid #b0b0b0; font-size: 14.500px; }
.row-heads span { border-bottom: 1px solid #b0b0b0; display: flex; align-items: flex-end; justify-content: center; line-height: 17px; }
.row-heads .sel { background: #d2d2d2; color: #1d6b45; }
.frame-top { grid-area: 2 / 2 / 3 / 24; background: #009b4e; margin-bottom: 1px; }
.frame-left { grid-area: 2 / 2 / -1 / 3; background: #009b4e; margin-right: 1px; }
.frame-right { grid-area: 2 / 23 / -1 / 24; background: #009b4e; margin-left: -1px; }
h1 { grid-area: 2 / 3 / 3 / 17; margin: 0; color: #fff; font-size: 24px; line-height: 30px; text-align: center; }
.lines { grid-area: 2 / 24 / -1 / -1; display: grid; grid-template-rows: subgrid; }
.lines i { border-bottom: 1px solid #d4d4d4; }
.line-v { grid-area: 2 / 24 / -1 / 25; border-right: 1px solid #d4d4d4; }

.entity { display: grid; grid-template-columns: subgrid; grid-template-rows: subgrid; margin: -1px 0 0 -1px; border: 1px solid #784114; border-width: 1px 0 0 1px; background: #fff; }
.positions { grid-area: 4 / 4 / 8 / 9; }
.memberships { grid-area: 4 / 10 / 9 / 15; }
.students { grid-area: 4 / 16 / 9 / 21; }
.departments { grid-area: 12 / 4 / 16 / 9; }
.clubs { grid-area: 12 / 10 / 18 / 15; }
.teachers { grid-area: 12 / 16 / 17 / 21; }
.entity h2 { grid-column: 1 / -1; margin: 0; font-size: 14.500px; justify-content: center; }
.rec { grid-column: 1 / -1; display: grid; grid-template-columns: subgrid; font-size: 14.600px; }
.entity h2, .entity b, .rec span {
  display: flex; align-items: flex-end; justify-content: center;
  border: 1px solid #784114; border-width: 0 1px 1px 0; line-height: 17px;
}
.entity h2, .entity b { background: #fff000; }
.entity b { font-size: 14.900px; }
.entity b:nth-of-type(3), .entity b:nth-of-type(4), .rec span:nth-child(3), .rec span:nth-child(4) { justify-content: flex-start; padding-left: 2px; }
.rec span:nth-child(2) { font-size: 17.500px; line-height: 16px; }
.rec span:nth-child(3) { letter-spacing: .25px; }
.pk { background: #bad5ec; }
.fk { background: #f9cdaa; }
.active-cell { grid-area: 27 / 15 / 28 / 16; border: 2px solid #1d6b45; margin: -2px -1px 0 -2px; position: relative; }
.active-cell::after { content: ""; position: absolute; right: -3px; bottom: -3px; width: 5px; height: 5px; background: #1d6b45; border: 1px solid #fff; border-width: 1px 0 0 1px; }
.links { position: absolute; left: 0; top: 0; }

.vscroll { display: grid; grid-template-rows: 15px 635px 121px 15px; padding: 2px 3px 0 3px; width: 20px; }
.btn { background: #fff; border: 1px solid #b0b0b0; display: flex; align-items: center; justify-content: center; }
.thumb { background: #fff; border: 1px solid #a6a6a6; }
.track { background: #dadada; }

/* Sheet tabs */
.sheetbar {
  border-top: 1px solid #9a9a9a; border-bottom: 1px solid #c6c6c6;
  display: grid; grid-template-columns: 28px 45px 65px 50px 939px 15px auto; padding-left: 27px; align-items: center;
}
.tri { width: 4px; height: 8px; background: #b8b8b8; }
.tri.left { clip-path: polygon(100% 0, 100% 100%, 0 50%); }
.tri.right { clip-path: polygon(0 0, 0 100%, 100% 50%); }
.tri.dark { background: #555; }
.sheet-tab { align-self: start; background: #fff; height: 25px; margin-top: -1px; border: 1px solid #9a9a9a; border-width: 0 1px 2px; border-bottom-color: #1d6b45; color: #1d6b45; font-size: 13px; font-weight: 700; line-height: 26px; text-align: center; letter-spacing: -.5px; }
.add { justify-self: end; }
.sheetbar .dots { align-self: center; justify-self: start; margin: 0 0 0 -2px; grid-column: 6; }
.sheetbar .hscroll { display: grid; grid-column: 7; grid-template-columns: 15px 669px 33px 16px; height: 15px; }

/* Status bar */
.status { background: #f3f3f3; display: grid; grid-template-columns: 1626px 38px 37px 38px 11px 105px 12px auto; padding-left: 8px; align-items: center; }
.view { height: 22px; display: grid; place-items: center; }
.view.on { background: #c6c6c6; }
.minus { width: 6px; height: 2px; background: #666; justify-self: end; }
.slider { height: 1px; background: #aaa; margin-left: 5px; position: relative; }
.slider i { position: absolute; left: 48px; top: -5px; width: 5px; height: 11px; background: #666; }
.plus { width: 8px; height: 8px; justify-self: end; background: linear-gradient(#666, #666) 50% 50% / 8px 2px no-repeat, linear-gradient(#666, #666) 50% 50% / 2px 8px no-repeat; }
.pct { padding-left: 11px; font-size: 11px; }

/* Taskbar */
.taskbar { background: #021e33; display: grid; grid-template-columns: 48px repeat(14, 49px) 1115px 14px auto; align-items: center; color: #fff; }
.taskbar > div:not(.clock) { height: 39px; display: grid; place-items: center; position: relative; }
.taskbar .current { background: #0b3357; }
.open::after { content: ""; position: absolute; left: 4px; right: 5px; bottom: 0; height: 2px; background: #76a3d2; }
.current::after { left: 0; right: 0; }
.multi::after { background: linear-gradient(90deg, #76a3d2 78%, #345876 78%); }
.pen { justify-self: end; }
.clock { display: flex; flex-direction: column; line-height: 18px; grid-column: 18; letter-spacing: -.65px; }
```
